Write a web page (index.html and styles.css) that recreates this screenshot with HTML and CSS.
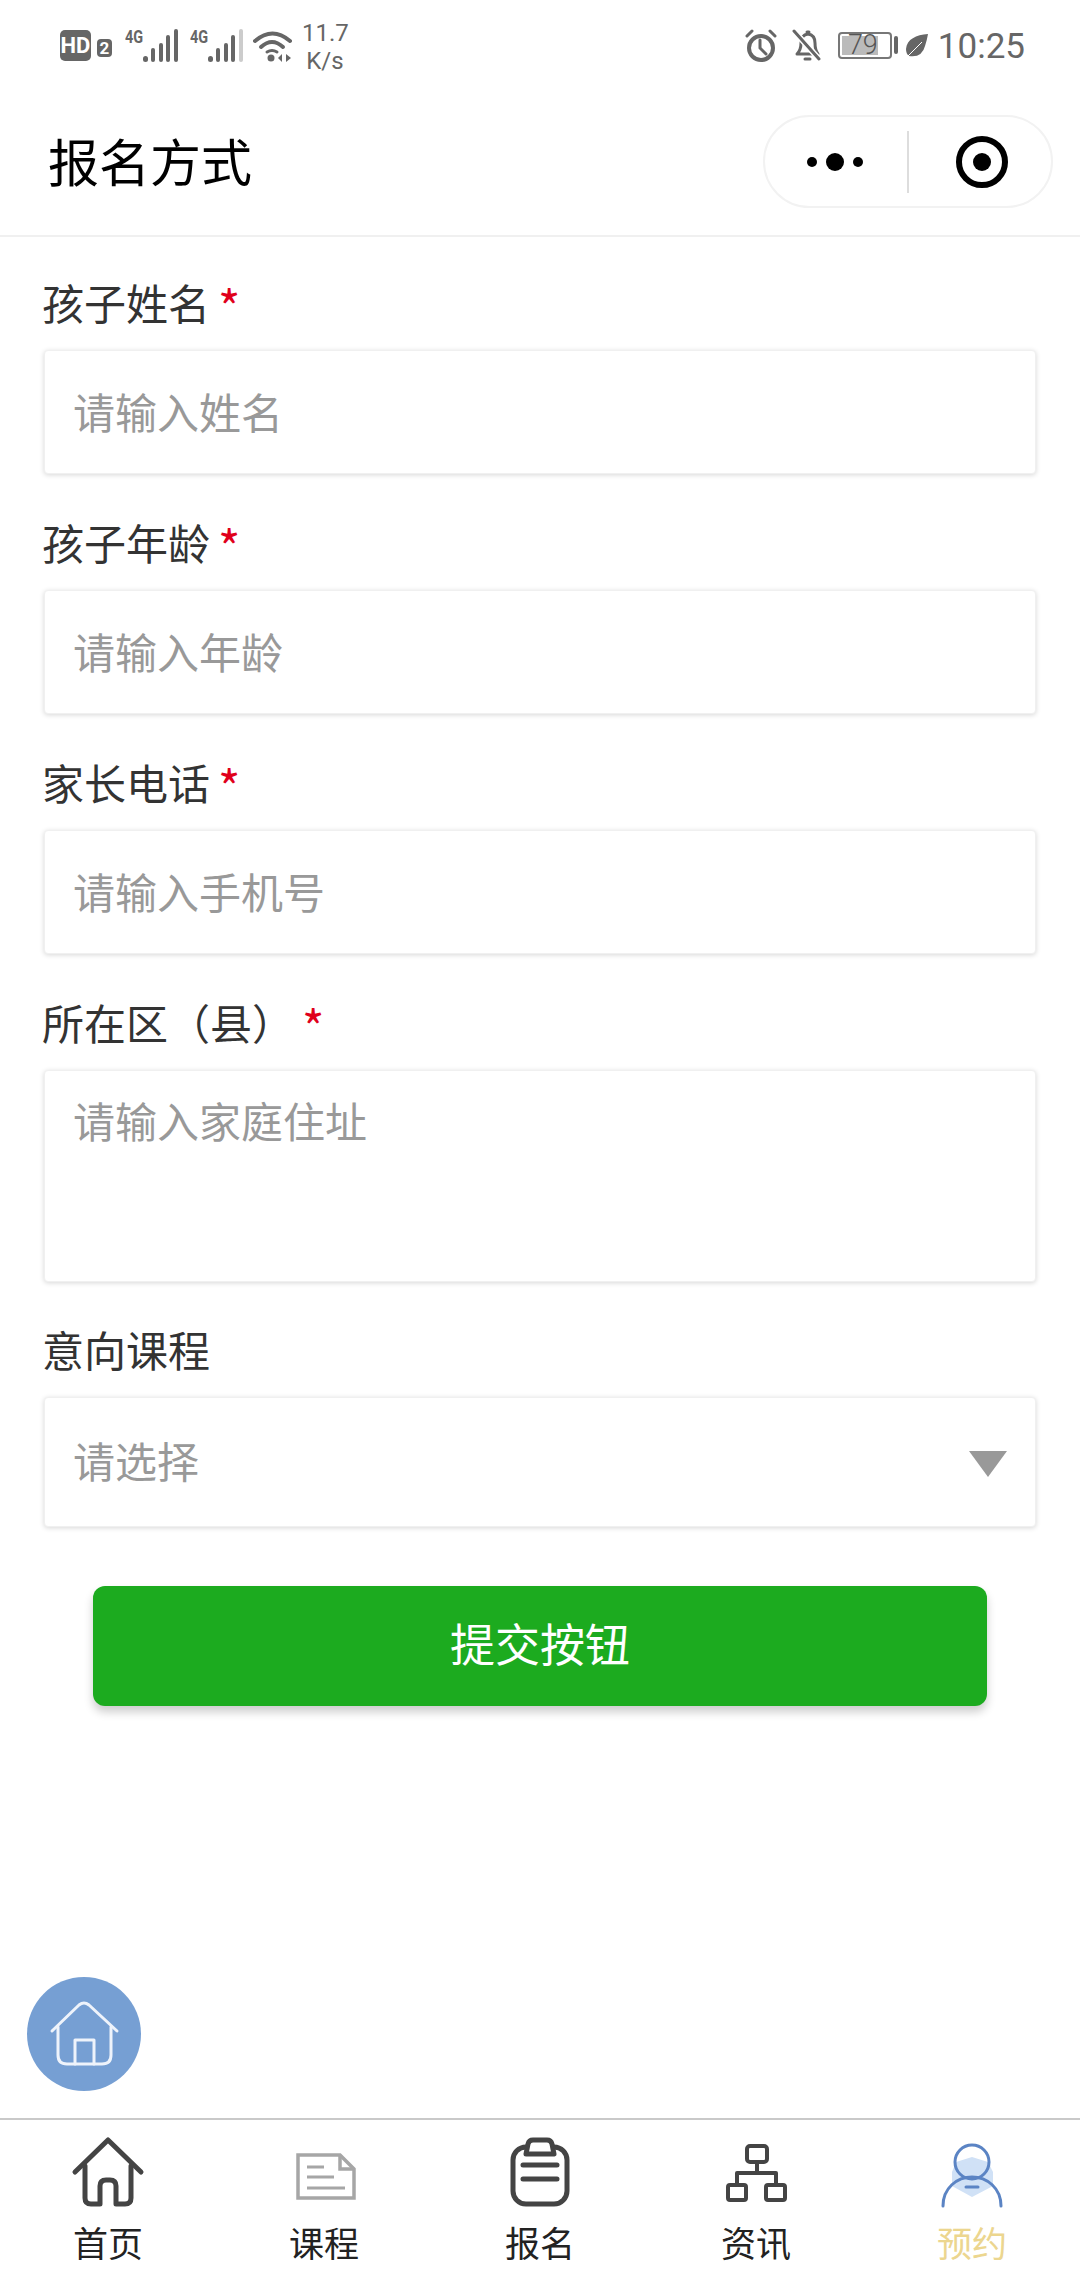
FILE: index.html
```html
<!DOCTYPE html>
<html lang="zh-CN">
<head>
    <meta charset="UTF-8">
    <title>报名方式</title>
    <link rel="stylesheet" href="styles.css">
</head>
<body>
    <div class="page">
        <!-- Status bar -->
        <div class="status">
            <div class="status-left">
                <span class="hd">HD</span>
                <span class="hd-num">2</span>
                <div class="sim">
                    <span class="sim-label">4G</span>
                    <svg width="35" height="33" viewBox="0 0 35 33">
                        <rect x="0" y="27" width="5" height="6" rx="2.5" fill="#666"/>
                        <rect x="8" y="19" width="4" height="14" rx="2" fill="#666"/>
                        <rect x="16" y="14" width="4" height="19" rx="2" fill="#666"/>
                        <rect x="23" y="6" width="4" height="27" rx="2" fill="#666"/>
                        <rect x="31" y="0" width="4" height="33" rx="2" fill="#666"/>
                    </svg>
                </div>
                <div class="sim">
                    <span class="sim-label">4G</span>
                    <svg width="35" height="33" viewBox="0 0 35 33">
                        <rect x="0" y="27" width="5" height="6" rx="2.5" fill="#666"/>
                        <rect x="8" y="19" width="4" height="14" rx="2" fill="#666"/>
                        <rect x="16" y="14" width="4" height="19" rx="2" fill="#666"/>
                        <rect x="23" y="6" width="4" height="27" rx="2" fill="#666"/>
                        <rect x="31" y="0" width="4" height="33" rx="2" fill="#ccc"/>
                    </svg>
                </div>
                <svg class="wifi" width="39" height="33" viewBox="0 0 39 33" fill="none" stroke="#666" stroke-linecap="round">
                    <path d="M2 12Q19.5 -3 37 12" stroke-width="4"/>
                    <path d="M8 18Q19 8 30 18" stroke-width="4"/>
                    <path d="M14 23Q19 20 24 23" stroke-width="3"/>
                    <circle cx="18" cy="29" r="3.5" fill="#666" stroke="none"/>
                    <path d="M25 29L29 25V33ZM33 25L38 29L33 33Z" fill="#666" stroke="none"/>
                </svg>
                <div class="speed">11.7<br>K/s</div>
            </div>
            <div class="status-right">
                <svg width="32" height="33" viewBox="0 0 32 33" fill="none" stroke="#666" stroke-linecap="round">
                    <circle cx="16" cy="19" r="12" stroke-width="4"/>
                    <path d="M2 7L7 2M25 2L30 7" stroke-width="3"/>
                    <path d="M15 11V19L21 25" stroke-width="3"/>
                </svg>
                <svg class="bell" width="29" height="32" viewBox="0 0 29 32" fill="none" stroke="#666" stroke-width="3" stroke-linecap="round" stroke-linejoin="round">
                    <path d="M5 25Q9 21 9 14Q9 6 16 5Q23 6 23 14Q23 21 26 25Z"/>
                    <path d="M13 30H18M15 3H17"/>
                    <path d="M2 2L27 30" stroke="#fff" stroke-width="6"/>
                    <path d="M2 2L27 30"/>
                </svg>
                <div class="battery">79</div>
                <span class="battery-nub"></span>
                <svg class="leaf" width="22" height="23" viewBox="0 0 22 23">
                    <path d="M22 0C10 1 1 5 0 15Q0 20 3 22Q16 24 19 12Q21 6 22 0Z" fill="#666"/>
                    <path d="M2 22L16 8" stroke="#fff" stroke-width="1"/>
                </svg>
                <span class="clock">10:25</span>
            </div>
        </div>

        <!-- Title bar -->
        <div class="header">
            <div class="title">报名方式</div>
            <div class="capsule">
                <div class="capsule-btn">
                    <svg width="70" height="20" viewBox="0 0 70 20">
                        <circle cx="11" cy="10" r="5"/>
                        <circle cx="34" cy="10" r="9"/>
                        <circle cx="57" cy="10" r="5"/>
                    </svg>
                </div>
                <span class="capsule-line"></span>
                <div class="capsule-btn capsule-target">
                    <svg width="54" height="54" viewBox="0 0 54 54">
                        <circle cx="27" cy="27" r="23" fill="none" stroke="#000" stroke-width="6"/>
                        <circle cx="27" cy="27" r="9"/>
                    </svg>
                </div>
            </div>
        </div>

        <!-- Form -->
        <div class="form">
            <div class="label">孩子姓名<span class="star">*</span></div>
            <div class="field">请输入姓名</div>

            <div class="label">孩子年龄<span class="star">*</span></div>
            <div class="field">请输入年龄</div>

            <div class="label">家长电话<span class="star">*</span></div>
            <div class="field">请输入手机号</div>

            <div class="label">所在区（县）<span class="star">*</span></div>
            <div class="field field-area">请输入家庭住址</div>

            <div class="label">意向课程</div>
            <div class="field field-select">请选择<span class="arrow"></span></div>

            <div class="submit">提交按钮</div>
        </div>

        <!-- Floating home button -->
        <div class="home-btn">
            <svg width="114" height="114" viewBox="0 0 114 114" fill="none" stroke="#eef3fb" stroke-width="3" stroke-linecap="round" stroke-linejoin="round">
                <path d="M25 54L52 28Q57 24 62 28L90 54"/>
                <path d="M31 50V78Q31 87 40 87H75Q84 87 84 78V50"/>
                <path d="M48 87V63H67V87"/>
            </svg>
        </div>

        <!-- Tab bar -->
        <div class="tabbar">
            <div class="tab">
                <svg width="100" height="76" viewBox="0 0 100 76" fill="none" stroke="#444" stroke-width="5" stroke-linecap="round" stroke-linejoin="round">
                    <path d="M17 36L50 4L83 36"/>
                    <path d="M27 30V62Q27 68 33 68H42V50Q42 44 48 44H52Q58 44 58 50V68H67Q73 68 73 62V30"/>
                </svg>
                <span>首页</span>
            </div>
            <div class="tab">
                <svg width="100" height="76" viewBox="0 0 100 76" fill="none" stroke="#a6a6a6" stroke-width="3.5">
                    <path d="M24 19H66L80 33V62H24Z"/>
                    <path d="M66 19V33H80"/>
                    <path d="M33 31H50M33 41H60M33 52H71" stroke-width="3"/>
                </svg>
                <span>课程</span>
            </div>
            <div class="tab">
                <svg width="100" height="76" viewBox="0 0 100 76" fill="none" stroke="#444" stroke-width="5" stroke-linecap="round" stroke-linejoin="round">
                    <rect x="23" y="11" width="54" height="57" rx="13"/>
                    <path d="M36 18L38 8Q39 4 43 4H57Q61 4 62 8L64 18Z" fill="#fff"/>
                    <path d="M33 29H67M33 43H67"/>
                </svg>
                <span>报名</span>
            </div>
            <div class="tab">
                <svg width="100" height="76" viewBox="0 0 100 76" fill="none" stroke="#444" stroke-width="4" stroke-linejoin="round">
                    <rect x="41" y="10" width="20" height="16" rx="3"/>
                    <rect x="22" y="49" width="18" height="15" rx="2"/>
                    <rect x="60" y="49" width="19" height="15" rx="2"/>
                    <path d="M51 26V37M31 49V37H70V49"/>
                </svg>
                <span>资讯</span>
            </div>
            <div class="tab tab-active">
                <svg width="100" height="76" viewBox="0 0 100 76" fill="none" stroke="#5b84c4" stroke-width="3" stroke-linecap="round">
                    <path d="M50 21L66 26L71 36V50L50 61L30 50V36L34 26Z" fill="#d0e1f6" stroke="none"/>
                    <circle cx="50" cy="26" r="17"/>
                    <path d="M21 70C21 52 35 41 50 41C65 41 79 52 79 70"/>
                    <path d="M44 51H56"/>
                </svg>
                <span>预约</span>
            </div>
        </div>
    </div>
</body>
</html>
```
FILE: styles.css
```css
/* Reset and basic styles */
* {
    margin: 0;
    padding: 0;
    box-sizing: border-box;
}

body {
    width: 1080px;
    height: 2280px;
    overflow: hidden;
    background-color: #fff;
    font-family: "Noto Sans CJK SC", Roboto, sans-serif;
    color: #333;
}

.page {
    position: relative;
    width: 1080px;
    height: 2280px;
    display: flex;
    flex-direction: column;
}

/* Status bar */
.status {
    height: 90px;
    padding: 0 55px 0 60px;
    display: flex;
    justify-content: space-between;
    align-items: center;
    color: #666;
    font-family: Roboto, sans-serif;
}

.status-left,
.status-right {
    display: flex;
    align-items: center;
}

.hd {
    width: 31px;
    height: 31px;
    background-color: #666;
    border-radius: 5px;
    color: #fff;
    font-size: 22px;
    font-weight: 700;
    line-height: 31px;
    text-align: center;
}

.hd-num {
    width: 15px;
    height: 18px;
    margin: 5px 0 0 6px;
    background-color: #666;
    border-radius: 4px;
    color: #fff;
    font-size: 17px;
    font-weight: 700;
    line-height: 18px;
    text-align: center;
}

.sim {
    display: flex;
    align-items: flex-start;
    margin-left: 13px;
}

.sim + .sim {
    margin-left: 12px;
}

.sim-label {
    width: 18px;
    font-size: 19px;
    font-weight: 700;
    line-height: 15px;
    transform: scaleX(0.76);
    transform-origin: left top;
}

.wifi {
    margin-left: 10px;
}

.speed {
    width: 46px;
    margin: 3px 0 0 10px;
    font-size: 24px;
    line-height: 28px;
    text-align: center;
}

.bell {
    margin-left: 15px;
}

.battery {
    width: 54px;
    height: 27px;
    margin-left: 17px;
    padding-right: 12px;
    border: 2px solid #777;
    border-radius: 4px;
    background: linear-gradient(#bbb, #bbb) no-repeat 2px 2px / 36px 19px;
    font-size: 27px;
    font-weight: 300;
    line-height: 23px;
    text-align: right;
    color: #555;
}

.battery-nub {
    width: 4px;
    height: 18px;
    margin-left: 2px;
    background-color: #666;
    border-radius: 2px;
}

.leaf {
    margin-left: 8px;
}

.clock {
    margin: 2px 0 0 10px;
    font-size: 35px;
    line-height: 1;
}

/* Title bar */
.header {
    height: 147px;
    padding: 0 27px 2px 48px;
    display: flex;
    justify-content: space-between;
    align-items: center;
    border-bottom: 2px solid #f0f0f0;
}

.title {
    padding-bottom: 3px;
    font-size: 51px;
    color: #000;
}

.capsule {
    width: 290px;
    height: 93px;
    display: flex;
    align-items: center;
    border: 2px solid #f2f2f2;
    border-radius: 47px;
}

.capsule-btn {
    flex: 1;
    display: flex;
    justify-content: center;
    align-items: center;
}

.capsule-target svg {
    margin-left: 4px;
}

.capsule-line {
    width: 2px;
    height: 62px;
    background-color: #ddd;
}

/* Form */
.form {
    flex: 1;
    padding: 38px 44px 0;
}

.label {
    height: 60px;
    margin: 0 0 15px -2px;
    font-size: 42px;
    line-height: 54px;
    color: #333;
}

.star {
    margin-left: 8px;
    font-size: 48px;
    line-height: 0;
    vertical-align: -6px;
    color: #e0001b;
}

.field {
    height: 124px;
    margin-bottom: 41px;
    padding: 0 28px 3px;
    display: flex;
    align-items: center;
    background-color: #fff;
    border: 1px solid #f0f0f0;
    border-radius: 4px;
    box-shadow: 0 1px 5px rgba(0, 0, 0, 0.16);
    font-size: 42px;
    color: #999;
}

.field-area {
    height: 212px;
    padding-top: 19px;
    align-items: flex-start;
    line-height: 60px;
    margin-bottom: 40px;
}

.field-select {
    height: 130px;
    margin-bottom: 59px;
    padding-bottom: 6px;
    justify-content: space-between;
}

.arrow {
    width: 0;
    height: 0;
    margin-top: 10px;
    border-left: 19px solid transparent;
    border-right: 19px solid transparent;
    border-top: 26px solid #999;
}

.submit {
    height: 120px;
    margin: 0 49px;
    padding-bottom: 7px;
    display: flex;
    justify-content: center;
    align-items: center;
    background-color: #1cab1f;
    border-radius: 12px;
    box-shadow: 0 6px 10px rgba(0, 0, 0, 0.2);
    font-size: 45px;
    color: #fff;
}

/* Floating home button */
.home-btn {
    position: absolute;
    left: 27px;
    top: 1977px;
    width: 114px;
    height: 114px;
    background-color: #769fd3;
    border-radius: 50%;
}

/* Tab bar */
.tabbar {
    height: 162px;
    padding-top: 16px;
    display: grid;
    grid-template-columns: repeat(5, 1fr);
    border-top: 2px solid #c9c9c9;
}

.tab {
    display: flex;
    flex-direction: column;
    align-items: center;
    font-size: 35px;
    line-height: 60px;
    color: #222;
}

.tab-active {
    color: #ecd68f;
}
```
